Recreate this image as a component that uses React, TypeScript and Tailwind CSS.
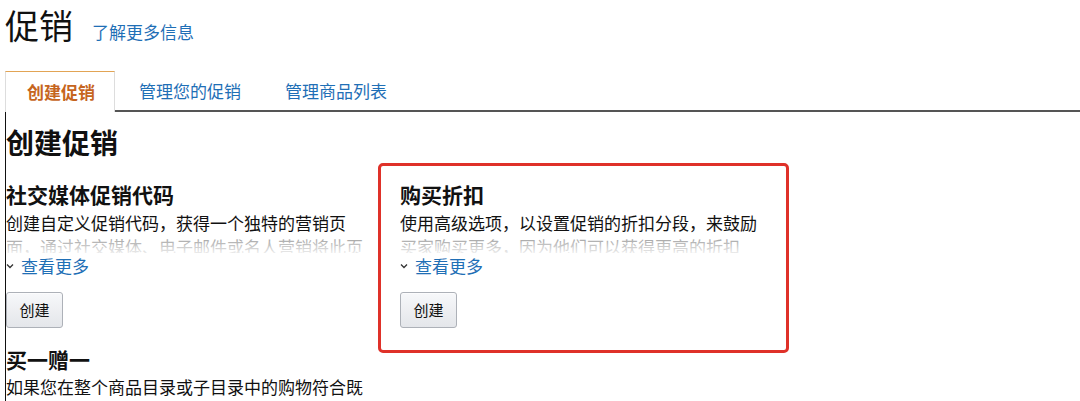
import React from "react";

function Chevron() {
  return (
    <svg width="8" height="6" viewBox="0 0 8 6" className="mr-[7px] shrink-0">
      <path d="M1 1.5 L4 4.5 L7 1.5" fill="none" stroke="#333" strokeWidth="1.3" />
    </svg>
  );
}

function Card({ title, lines }: { title: string; lines: [string, string] }) {
  return (
    <div className="flex flex-col">
      <h3 className="text-[21px] font-bold leading-[28px] text-[#111]">{title}</h3>
      <div className="relative mt-[3px] h-[42px] overflow-hidden text-[17px] leading-[24px] text-[#111] whitespace-nowrap">
        <div>{lines[0]}</div>
        <div>{lines[1]}</div>
        <div className="absolute inset-x-0 top-[22px] h-[24px] bg-gradient-to-b from-white/50 to-white" />
      </div>
      <a className="mt-[3px] flex items-center text-[17px] leading-[20px] text-[#1f6fb6]">
        <Chevron />
        查看更多
      </a>
      <div className="mt-[16px]">
        <button className="h-[36px] w-[57px] rounded-[3px] border border-[#adb1b8] bg-gradient-to-b from-[#f7f8fa] to-[#e4e6ea] text-[15px] text-[#111] shadow-[0_1px_0_rgba(255,255,255,0.6)_inset]">
          创建
        </button>
      </div>
    </div>
  );
}

export default function App() {
  return (
    <div className="h-[401px] w-[1080px] overflow-hidden bg-white pl-[5px] font-['Noto_Sans_CJK_SC',sans-serif] text-[#111]">
      <div className="flex items-baseline pt-[1px]">
        <h1 className="text-[34px] font-normal leading-[48px] text-[#111]">促销</h1>
        <a className="ml-[19px] text-[17px] leading-[20px] text-[#1f6fb6]">了解更多信息</a>
      </div>
      <div className="mt-[22px] flex h-[41px] items-stretch">
        <div className="flex w-[110px] items-center justify-center border-x border-t border-x-[#ddd] border-t-[#e2a455] text-[17px] font-bold text-[#c6651e]">
          <span className="ml-[2px]">创建促销</span>
        </div>
        <div className="flex flex-1 items-center border-b-2 border-[#555] text-[17px] text-[#1f6fb6]">
          <span className="ml-[24px]">管理您的促销</span>
          <span className="ml-[44px]">管理商品列表</span>
        </div>
      </div>
      <div className="h-[300px] border-l border-[#111]">
        <h2 className="pt-[12px] text-[28px] font-bold leading-[36px] text-[#111]">创建促销</h2>
        <div className="mt-[3px] grid grid-cols-[372px_411px]">
          <div className="flex flex-col pt-[17px]">
            <Card
              title="社交媒体促销代码"
              lines={["创建自定义促销代码，获得一个独特的营销页", "面，通过社交媒体、电子邮件或名人营销将此页"]}
            />
            <h3 className="mt-[17px] text-[21px] font-bold leading-[28px] text-[#111]">买一赠一</h3>
            <div className="mt-[2px] text-[17px] leading-[24px] whitespace-nowrap">如果您在整个商品目录或子目录中的购物符合既</div>
          </div>
          <div className="h-[190px] rounded-[5px] border-[3px] border-[#df3129] pl-[19px] pt-[14px]">
            <Card
              title="购买折扣"
              lines={["使用高级选项，以设置促销的折扣分段，来鼓励", "买家购买更多，因为他们可以获得更高的折扣"]}
            />
          </div>
        </div>
      </div>
    </div>
  );
}
